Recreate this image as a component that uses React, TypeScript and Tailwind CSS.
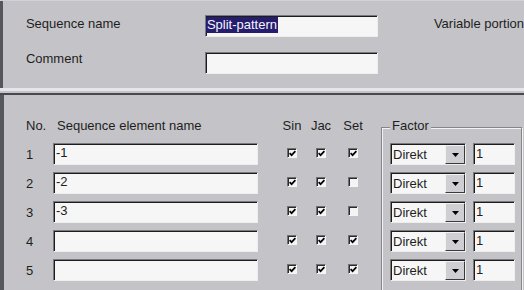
function Field({ className = "", children }: { className?: string; children?: React.ReactNode }) {
  return (
    <div
      className={`h-[22px] bg-[#f6f6f6] border border-t-[#7a7a7e] border-l-[#7a7a7e] border-r-[#eeeeee] border-b-[#eeeeee] shadow-[inset_1px_1px_0_#1c1c1c] ${className}`}
    >
      {children}
    </div>
  )
}

function Check({ on }: { on: boolean }) {
  return (
    <div className="w-[10px] h-[10px] mb-[3px] bg-[#f4f4f4] border border-t-[#707074] border-l-[#707074] border-r-[#f6f6f6] border-b-[#f6f6f6] shadow-[inset_1px_1px_0_#2a2a2a] flex items-center justify-center">
      {on && (
        <svg width="7" height="7" viewBox="0 0 7 7" className="ml-[1px] mt-[1px]">
          <path d="M0.6 3.2 L2.6 5.2 L6.4 1.2" stroke="#000" strokeWidth="1.7" fill="none" />
        </svg>
      )}
    </div>
  )
}

function Combo() {
  return (
    <Field className="w-[76px] flex">
      <div className="flex-1 pl-[2px] pt-[3px]">Direkt</div>
      <div className="w-[20px] h-[19px] mt-[1px] bg-[#cfcfd3] border border-t-[#f2f2f2] border-l-[#f2f2f2] border-r-[#3a3a3a] border-b-[#3a3a3a] flex items-center justify-center">
        <svg width="7" height="4" viewBox="0 0 7 4">
          <path d="M0 0H7L3.5 4Z" fill="#000" />
        </svg>
      </div>
    </Field>
  )
}

const rows = [
  { no: 1, name: "-1", sin: true, jac: true, set: true },
  { no: 2, name: "-2", sin: true, jac: true, set: false },
  { no: 3, name: "-3", sin: true, jac: true, set: false },
  { no: 4, name: "", sin: true, jac: true, set: true },
  { no: 5, name: "", sin: true, jac: true, set: true },
]

export default function App() {
  return (
    <div className="w-[524px] h-[290px] overflow-hidden bg-[#c4c4c8] text-[13px] leading-[15px] text-[#1e1e1e] font-['Liberation_Sans',Arial,sans-serif]">
      {/* header panel */}
      <div className="flex h-[88px] border-t border-[#d2d2d6]">
        <div className="w-[3px] bg-[#55575c]" />
        <div className="flex-1 pl-[23px] pt-[14px]">
          <div className="flex items-start">
            <div className="w-[179px] mt-[1px]">Sequence name</div>
            <Field className="w-[173px]">
              <span className="inline-block ml-[0px] mt-[1px] px-[1px] h-[16px] leading-[16px] bg-[#261d6c] text-[#f4f4ff]">
                Split-pattern
              </span>
            </Field>
            <div className="ml-[56px] mt-[1px] whitespace-nowrap">Variable portion</div>
          </div>
          <div className="flex items-start mt-[15px]">
            <div className="w-[179px] -mt-[1px]">Comment</div>
            <Field className="w-[173px]" />
          </div>
        </div>
      </div>

      {/* separator */}
      <div className="h-[3px] bg-[#e6e6ea]" />
      <div className="h-[2px]" />
      <div className="h-[2px] bg-[#47494e]" />

      {/* sequence elements */}
      <div className="flex h-[200px]">
        <div className="w-[4px] bg-[#55575c]" />
        <div className="flex items-start pl-[22px] pt-[23px]">
          <div>
            <div className="flex">
              <div className="w-[27px]">No.</div>
              <div className="w-[205px] pl-[4px]">Sequence element name</div>
              <div className="w-[17px]" />
              <div className="w-[34px] text-center">Sin</div>
              <div className="w-[24px] text-center">Jac</div>
              <div className="w-[40px] text-center">Set</div>
            </div>
            <div className="flex flex-col gap-[7px] mt-[10px]">
              {rows.map((r) => (
                <div key={r.no} className="flex items-center">
                  <div className="w-[27px]">{r.no}</div>
                  <Field className="w-[205px] pl-[2px] pt-[1px]">{r.name}</Field>
                  <div className="w-[17px]" />
                  <div className="w-[34px] flex justify-center">
                    <Check on={r.sin} />
                  </div>
                  <div className="w-[24px] flex justify-center">
                    <Check on={r.jac} />
                  </div>
                  <div className="w-[40px] flex justify-center">
                    <Check on={r.set} />
                  </div>
                </div>
              ))}
            </div>
          </div>

          <div className="relative ml-[8px] mt-[9px] w-[141px] h-[180px] border border-[#86868a] shadow-[inset_1px_1px_0_#f2f2f2,1px_1px_0_#f2f2f2] pl-[8px] pt-[15px]">
            <div className="absolute -top-[10px] left-[8px] px-[2px] bg-[#c4c4c8]">Factor</div>
            <div className="flex flex-col gap-[7px]">
              {rows.map((r) => (
                <div key={r.no} className="flex gap-[7px]">
                  <Combo />
                  <Field className="w-[42px] pl-[2px] pt-[2px]">1</Field>
                </div>
              ))}
            </div>
          </div>
        </div>
      </div>
    </div>
  )
}
